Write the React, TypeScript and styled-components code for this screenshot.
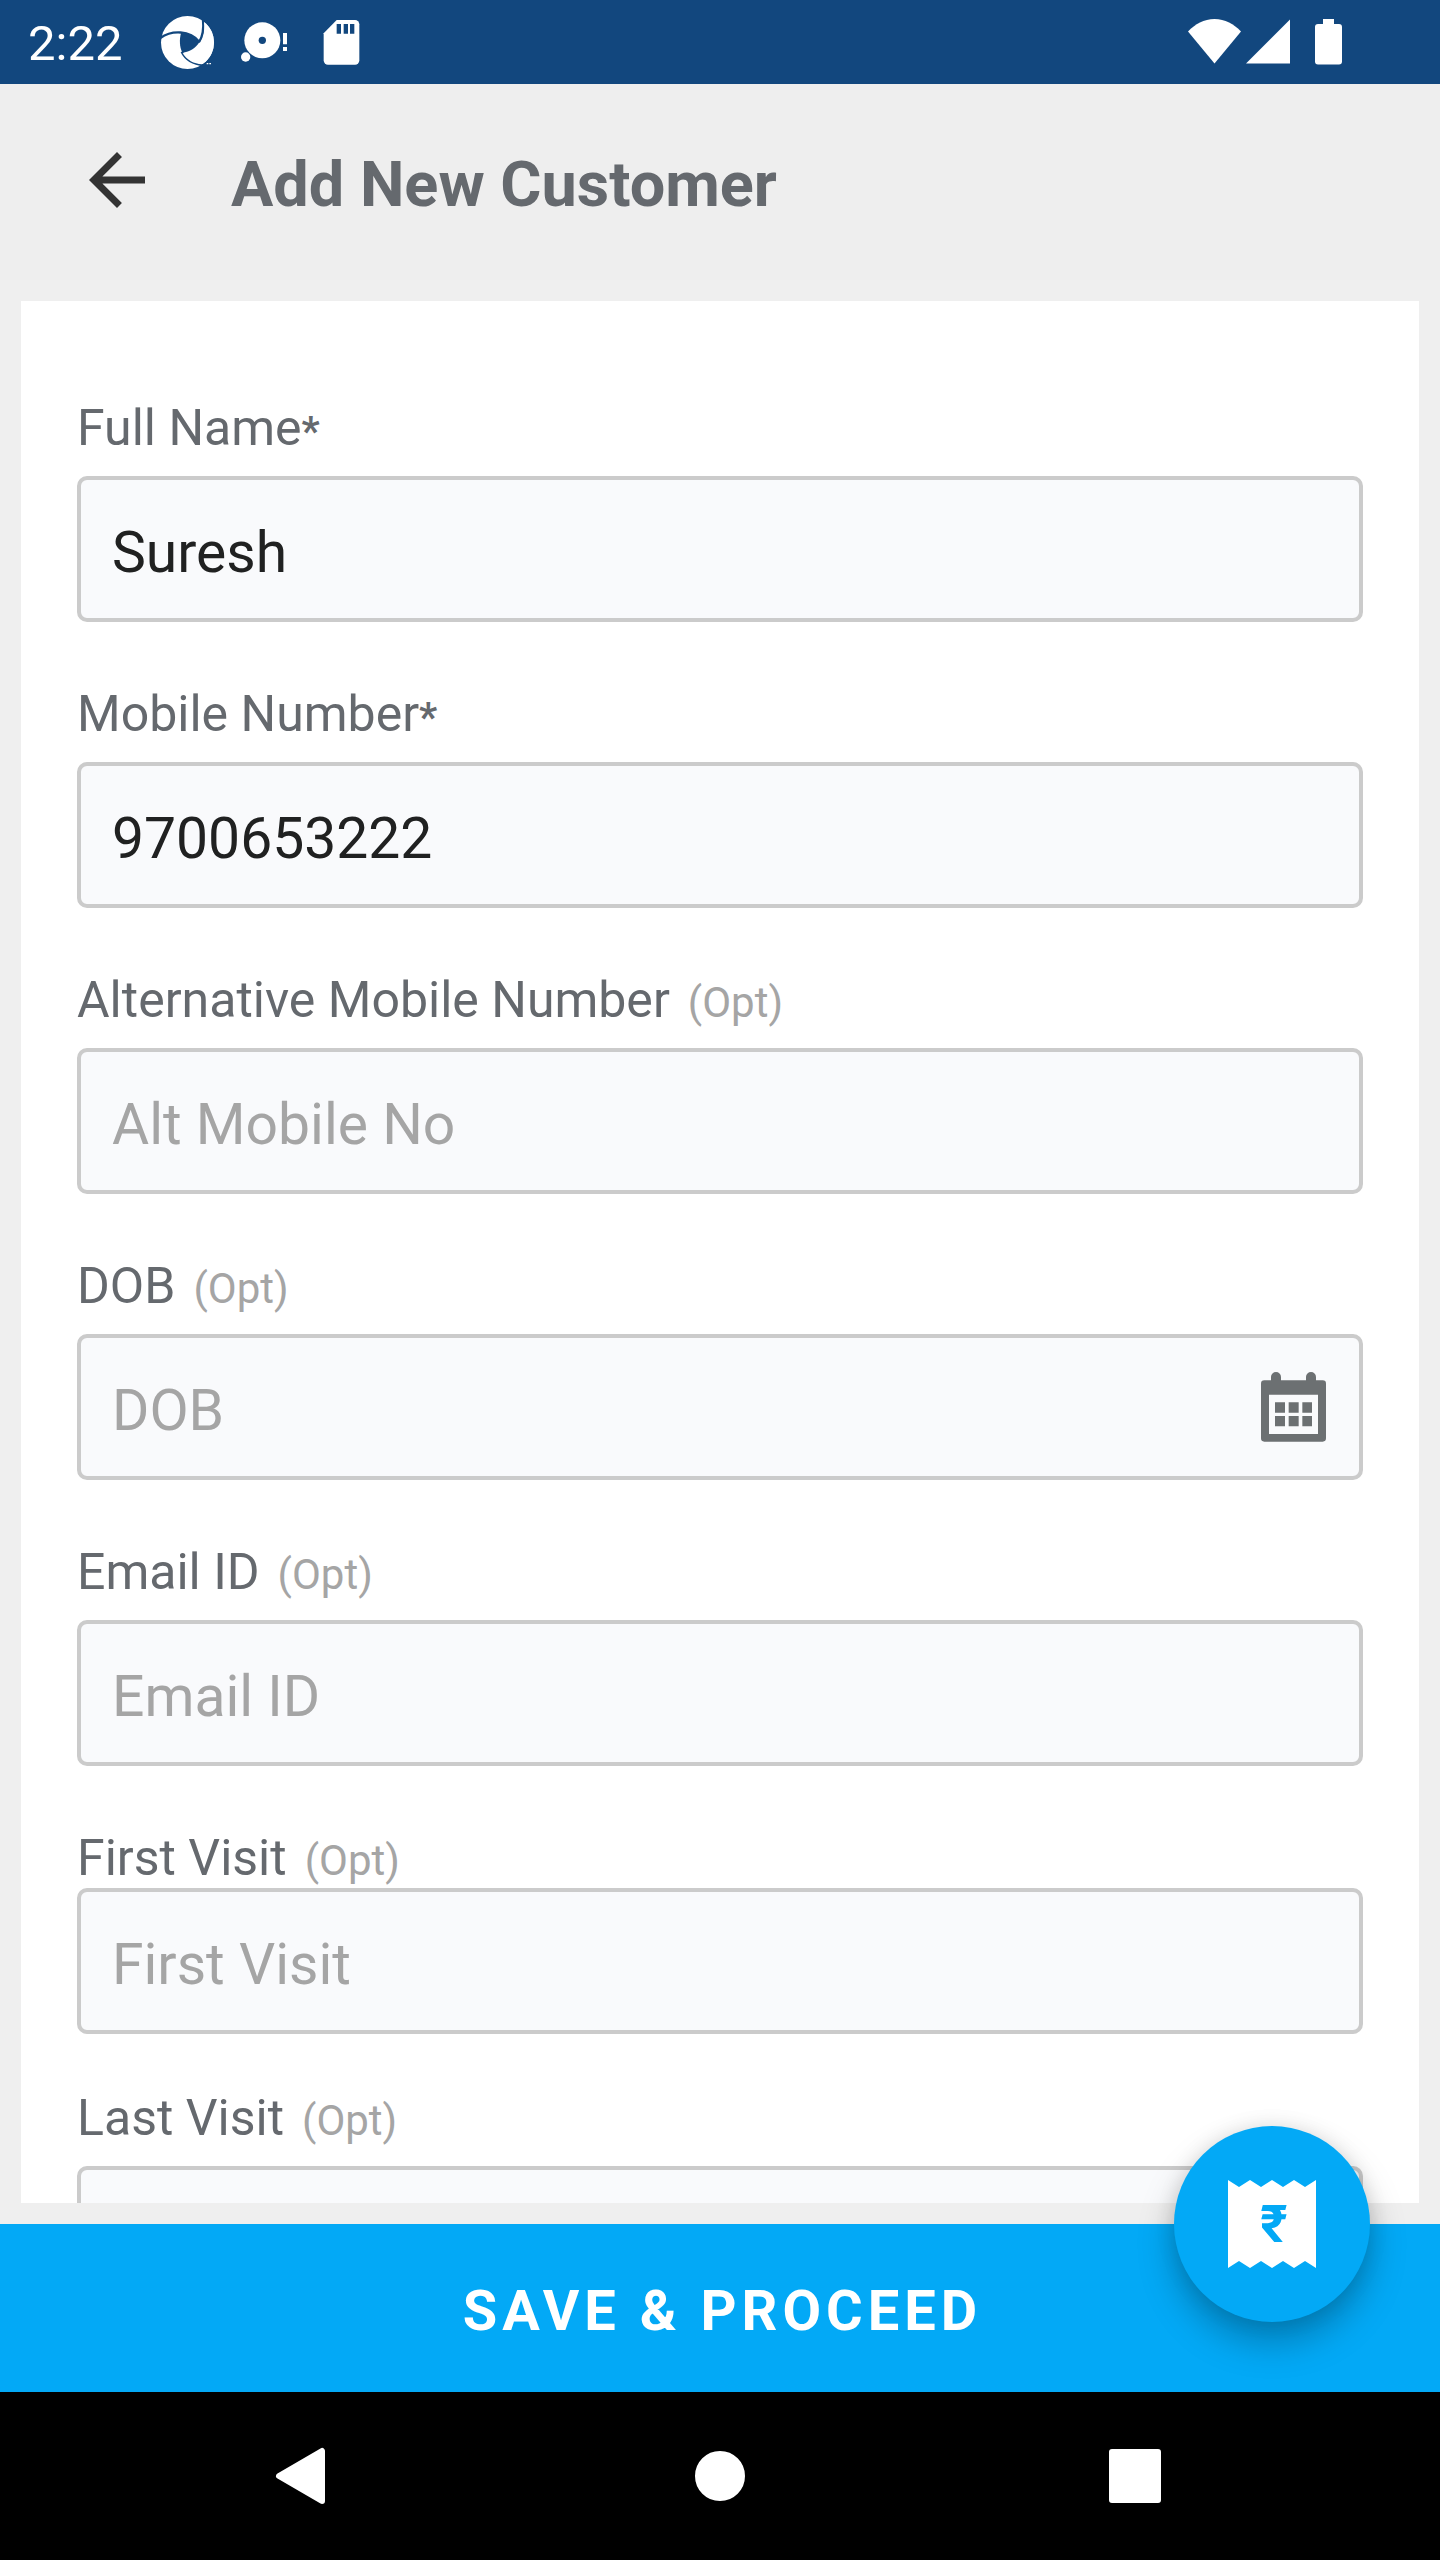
import React, { useId } from "react";
import styled, { createGlobalStyle } from "styled-components";

const GlobalStyle = createGlobalStyle`
  *, *::before, *::after { box-sizing: border-box; }
  body { margin: 0; font-family: Roboto, "Noto Sans", sans-serif; background: #efefef; }
  button, input { font-family: inherit; }
  svg { display: block; flex: none; }
`;

const Screen = styled.div`
  display: flex;
  flex-direction: column;
  height: 100vh;
  background: #efefef;
`;

const StatusBar = styled.div`
  display: flex;
  align-items: center;
  justify-content: space-between;
  height: 84px;
  padding: 0 98px 0 28px;
  background: #12477e;
  color: #fff;
`;

const StatusGroup = styled.div<{ $gap: number }>`
  display: flex;
  align-items: center;
  gap: ${(p) => p.$gap}px;
`;

const Clock = styled.time`
  min-width: 121px;
  padding-top: 4px;
  font-size: 49px;
  line-height: 56px;
`;

const Header = styled.header`
  display: flex;
  align-items: center;
  gap: 72px;
  height: 196px;
  padding: 0 75px 4px;
  background: #eeeeee;
`;

const IconButton = styled.button`
  display: flex;
  align-items: center;
  justify-content: center;
  padding: 0;
  border: 0;
  background: none;
  color: inherit;
  cursor: pointer;
`;

const Title = styled.h1`
  margin: 0;
  padding-top: 10px;
  color: #65696e;
  font-size: 63px;
  font-weight: 700;
  line-height: 72px;
`;

const Card = styled.main`
  flex: 1;
  min-height: 0;
  margin: 21px;
  padding: 99px 56px 0;
  overflow: hidden;
  background: #fff;
`;

const Form = styled.form`
  display: flex;
  flex-direction: column;
  gap: 56px;
`;

const FieldGroup = styled.div`
  display: flex;
  flex-direction: column;
  gap: 64px;
`;

const FieldBox = styled.div<{ $tight?: boolean }>`
  display: flex;
  flex-direction: column;
  gap: ${(p) => (p.$tight ? 2 : 20)}px;
`;

const Label = styled.label`
  display: flex;
  align-items: baseline;
  height: 56px;
  color: #65696e;
  font-size: 50px;
  line-height: 56px;
`;

const Star = styled.span`
  font-size: 40px;
  font-weight: 700;
  line-height: 40px;
`;

const Optional = styled.span`
  margin-left: 18px;
  color: #a5a5a5;
  font-size: 42px;
  line-height: 40px;
`;

const InputFrame = styled.div`
  display: flex;
  align-items: center;
  height: 146px;
  padding-right: 33px;
  border: 4px solid #cbcbcb;
  border-radius: 10px;
  background: #f9fafc;
  color: #6c7072;
`;

const TextInput = styled.input`
  flex: 1;
  min-width: 0;
  height: 100%;
  padding: 6px 0 0 31px;
  border: 0;
  outline: 0;
  background: transparent;
  color: #202121;
  font-size: 57px;

  &::placeholder {
    color: #a5a5a5;
    opacity: 1;
  }
`;

const ActionBar = styled.footer`
  position: relative;
`;

const SaveButton = styled.button`
  display: block;
  width: 100%;
  height: 168px;
  padding: 6px 0 0 5px;
  border: 0;
  background: #03a9f6;
  color: #fff;
  font-size: 56px;
  font-weight: 700;
  letter-spacing: 5px;
  text-transform: uppercase;
  cursor: pointer;
`;

const Fab = styled.button`
  position: absolute;
  top: -98px;
  right: 70px;
  display: flex;
  align-items: center;
  justify-content: center;
  width: 196px;
  height: 196px;
  padding: 0;
  border: 0;
  border-radius: 50%;
  background: #03a9f6;
  box-shadow: 0 20px 36px rgba(0, 0, 0, 0.26), 0 0 20px rgba(0, 0, 0, 0.1);
  cursor: pointer;
`;

const NavBar = styled.nav`
  display: grid;
  grid-template-columns: repeat(3, 1fr);
  height: 168px;
  padding: 0 97px;
  background: #000;
  color: #fff;
`;

const ShutterIcon = () => (
  <svg width="77" height="84" viewBox="447 0 231 252" fill="none" aria-hidden="true">
    <circle cx="562.5" cy="127.500" r="79.500" fill="#fff" />
    <path d="M543 99 C565 96 585 108 598 126 C588 144 570 155 547 158 C538 140 538 118 543 99Z" fill="#12477e" />
    <g stroke="#12477e" strokeWidth="7">
      <path d="M481 114 C515 90 570 90 598 126" />
      <path d="M609 58 C612 88 609 108 597 127" />
      <path d="M545 155 C556 178 580 192 612 196" />
    </g>
    <path d="M610 192 L642 168 L642 210 L586 210Z" fill="#12477e" />
    <path d="M548 160 C560 180 582 192 606 193 A79.500 79.500 0 0 0 642 127 A79.500 79.500 0 0 0 612 66 C616 96 612 112 600 129 C588 148 572 157 548 160Z" fill="#fff" />
    <path d="M620 191h5M628 191h5" stroke="#fff" strokeWidth="4" />
  </svg>
);

const RecordIcon = () => (
  <svg width="77" height="84" viewBox="678 0 231 252" fill="#fff" aria-hidden="true">
    <circle cx="787" cy="121" r="54" />
    <circle cx="787" cy="121" r="11" fill="#12477e" />
    <circle cx="737" cy="171" r="14" />
    <path d="M849 99h12v34h-12zM849 141h12v12h-12z" />
  </svg>
);

const SdCardIcon = () => (
  <svg width="77" height="84" viewBox="909 0 231 252" aria-hidden="true">
    <path d="M1010 60H1065a13 13 0 0 1 13 13V181a13 13 0 0 1-13 13H984a13 13 0 0 1-13-13V100Z" fill="#fff" />
    <path d="M1010 72h13v29h-13zM1031 72h13v29h-13zM1050 72h13v29h-13z" fill="#12477e" />
  </svg>
);

const WifiIcon = () => (
  <svg width="53" height="46" viewBox="0 0 53 46" fill="#fff" aria-hidden="true">
    <path d="M0 12.500C7 5 16 0 26.500 0S46 5 53 12.500L26.500 44.500Z" />
  </svg>
);

const SignalIcon = () => (
  <svg width="44" height="46" viewBox="0 0 44 46" fill="#fff" aria-hidden="true">
    <path d="M44 0.500V44.500H0Z" />
  </svg>
);

const BatteryIcon = () => (
  <svg width="47" height="46" viewBox="0 0 47 46" fill="#fff" aria-hidden="true">
    <path d="M28 0H39V5H44a3 3 0 0 1 3 3V42.500a3 3 0 0 1-3 3H23a3 3 0 0 1-3-3V8a3 3 0 0 1 3-3h5Z" />
  </svg>
);

const BackArrowIcon = () => (
  <svg width="84" height="84" viewBox="0 0 24 24" fill="#333" aria-hidden="true">
    <path d="M20 11H7.830l5.590-5.590L12 4l-8 8 8 8 1.410-1.410L7.830 13H20v-2z" />
  </svg>
);

const CalendarIcon = () => (
  <svg width="65" height="70" viewBox="0 0 195 210" fill="currentColor" aria-hidden="true">
    <path
      fillRule="evenodd"
      d="M10 25H30V15a15 15 0 0 1 30 0V25H135V15a15 15 0 0 1 30 0V25H185a10 10 0 0 1 10 10V199a10 10 0 0 1-10 10H10a10 10 0 0 1-10-10V35a10 10 0 0 1 10-10ZM24 68V186H171V68Z"
    />
    <path d="M42 91h30v31H42zM83 91h30v31H83zM124 91h29v31h-29zM42 132h30v31H42zM83 132h30v31H83zM124 132h29v31h-29z" />
  </svg>
);

const ReceiptIcon = () => (
  <svg width="88" height="88" viewBox="0 0 88 88" aria-hidden="true">
    <path
      d="M0 0L11 7L22 0L33 7L44 0L55 7L66 0L77 7L88 0V88L77 81L66 88L55 81L44 88L33 81L22 88L11 81L0 88Z"
      fill="#fff"
    />
    <text x="46" y="62" textAnchor="middle" fontSize="52" fontWeight="700" fill="#03a9f6">
      ₹
    </text>
  </svg>
);

const NavIcon = ({ path }: { path: string }) => (
  <svg width="84" height="84" viewBox="0 0 84 84" fill="#fff" stroke="#fff" strokeWidth="6" strokeLinejoin="round" aria-hidden="true">
    <path d={path} />
  </svg>
);

type FieldProps = {
  label: string;
  required?: boolean;
  value?: string;
  placeholder?: string;
  type?: string;
  tight?: boolean;
  calendar?: boolean;
};

function Field({ label, required, value, placeholder, type = "text", tight, calendar }: FieldProps) {
  const id = useId();
  return (
    <FieldBox $tight={tight}>
      <Label htmlFor={id}>
        {label}
        {required ? <Star>*</Star> : <Optional>(Opt)</Optional>}
      </Label>
      <InputFrame>
        <TextInput id={id} type={type} defaultValue={value} placeholder={placeholder} required={required} />
        {calendar && (
          <IconButton type="button" aria-label="Choose date">
            <CalendarIcon />
          </IconButton>
        )}
      </InputFrame>
    </FieldBox>
  );
}

export default function App() {
  return (
    <Screen>
      <GlobalStyle />
      <StatusBar>
        <StatusGroup $gap={0}>
          <Clock>2:22</Clock>
          <ShutterIcon />
          <RecordIcon />
          <SdCardIcon />
        </StatusGroup>
        <StatusGroup $gap={5}>
          <WifiIcon />
          <SignalIcon />
          <BatteryIcon />
        </StatusGroup>
      </StatusBar>

      <Header>
        <IconButton type="button" aria-label="Back">
          <BackArrowIcon />
        </IconButton>
        <Title>Add New Customer</Title>
      </Header>

      <Card>
        <Form id="customer" onSubmit={(e) => e.preventDefault()}>
          <FieldGroup>
            <Field label="Full Name" required value="Suresh" />
            <Field label="Mobile Number" required type="tel" value="9700653222" />
            <Field label="Alternative Mobile Number" type="tel" placeholder="Alt Mobile No" />
            <Field label="DOB" placeholder="DOB" calendar />
            <Field label="Email ID" type="email" placeholder="Email ID" />
            <Field label="First Visit" placeholder="First Visit" tight />
          </FieldGroup>
          <Field label="Last Visit" />
        </Form>
      </Card>

      <ActionBar>
        <SaveButton type="submit" form="customer">
          Save &amp; Proceed
        </SaveButton>
        <Fab type="button" aria-label="Billing">
          <ReceiptIcon />
        </Fab>
      </ActionBar>

      <NavBar aria-label="System">
        <IconButton type="button" aria-label="Back">
          <NavIcon path="M16 42L59 17V67Z" />
        </IconButton>
        <IconButton type="button" aria-label="Home">
          <NavIcon path="M42 20A22 22 0 0 1 42 64A22 22 0 0 1 42 20Z" />
        </IconButton>
        <IconButton type="button" aria-label="Recent apps">
          <NavIcon path="M19 18H65V66H19Z" />
        </IconButton>
      </NavBar>
    </Screen>
  );
}
